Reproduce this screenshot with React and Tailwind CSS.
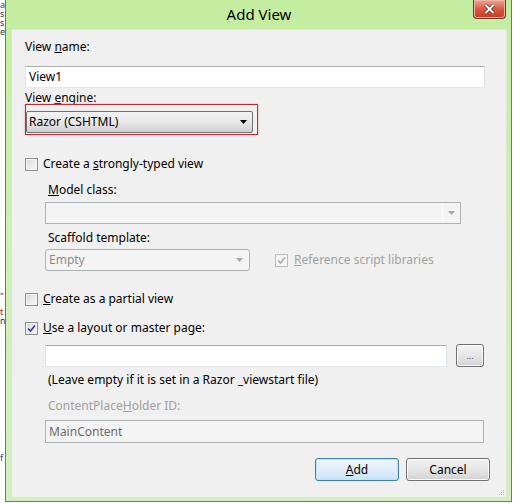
import React from "react";

// Win7-style checkbox
const Check = ({ checked = false, disabled = false }) => (
  <span
    className={
      disabled
        ? "flex h-[13px] w-[13px] shrink-0 items-center justify-center border border-[#bcbcbc] bg-[#f6f6f6]"
        : "flex h-[13px] w-[13px] shrink-0 items-center justify-center border border-[#8e8f8f] bg-gradient-to-br from-[#d9d9d9] to-[#fafafa] shadow-[inset_0_0_0_1px_#f4f4f4]"
    }
  >
    {checked && (
      <svg width="9" height="9" viewBox="0 0 9 9">
        <path
          d="M1 4.5 L3.5 7 L8 1.5"
          fill="none"
          stroke={disabled ? "#a8a8a8" : "#2b3f9a"}
          strokeWidth="1.6"
        />
      </svg>
    )}
  </span>
);

const Arrow = ({ color = "#000" }) => (
  <svg width="7" height="4" viewBox="0 0 7 4">
    <path d="M0 0 H7 L3.5 4 Z" fill={color} />
  </svg>
);

const Button = ({ children, primary = false, className = "" }) => (
  <button
    className={
      primary
        ? `flex h-[23px] items-center justify-center rounded-[3px] border border-[#3c7fb1] bg-gradient-to-b from-[#eef6fc] via-[#e0eef8] to-[#c9e2f2] shadow-[inset_0_0_0_1px_#bfe3f8] ${className}`
        : `flex h-[23px] items-center justify-center rounded-[3px] border border-[#707070] bg-gradient-to-b from-[#f2f2f2] via-[#e6e6e6] to-[#d2d2d2] shadow-[inset_0_0_0_1px_#fcfcfc] ${className}`
    }
  >
    {children}
  </button>
);

export default function App() {
  return (
    <div className="flex h-[503px] w-[515px] overflow-hidden bg-white font-['Noto_Sans',sans-serif] text-[12px] leading-[16px] text-black">
      {/* page behind the dialog */}
      <div className="flex w-[5px] shrink-0 flex-col items-start overflow-hidden text-[9px] leading-[9px]">
        <span className="text-[#1a3fa0]">a</span>
        <span className="text-[#333]">s</span>
        <span className="text-[#333]">s</span>
        <span className="text-[#333]">e</span>
        <span className="mt-[256px] text-[#333]">"</span>
        <span className="mt-[6px] text-[#b01010]">t</span>
        <span className="text-[#333]">n</span>
        <span className="mt-[128px] text-[#1a3fa0]">f</span>
      </div>

      {/* dialog frame */}
      <div className="relative flex h-[502px] w-[507px] shrink-0 flex-col border border-t-0 border-[#6c7c64] bg-gradient-to-b from-[#c4eda0] via-[#d0efb6] to-[#d6efc2] pl-[6px] pr-[5px] pb-[4px]">
        {/* title bar */}
        <div className="flex h-[30px] shrink-0 items-center justify-center pb-[2px] text-[15px] text-black">
          Add View
        </div>
        <div className="absolute right-[5px] top-0 flex h-[19px] w-[33px] items-center justify-center rounded-b-[4px] border border-t-0 border-[#7b2e22] bg-gradient-to-b from-[#e9a597] via-[#d75a45] to-[#c13a24] shadow-[inset_0_0_0_1px_#f0b4a8]">
          <svg width="11" height="10" viewBox="0 0 11 10">
            <path d="M1.5 1 L9.5 9 M9.5 1 L1.5 9" stroke="#5a1f18" strokeWidth="3.4" />
            <path d="M1.5 1 L9.5 9 M9.5 1 L1.5 9" stroke="#fff" strokeWidth="2" />
          </svg>
        </div>

        {/* client area */}
        <div className="relative flex h-[467px] flex-col bg-[#f0f0f0] pl-[13px] pt-[9px] shadow-[0_0_0_1px_#dbe8cf]">
          <div>
            View <span className="underline">n</span>ame:
          </div>
          <div className="mt-[11px] flex h-[22px] w-[460px] items-center border border-[#abadb3] border-b-[#e3e9ef] border-l-[#e2e3ea] border-r-[#dbdfe6] bg-white pl-[3px]">
            View1
          </div>
          <div className="mt-[2px]">
            View <span className="underline">e</span>ngine:
          </div>
          <div className="relative ml-[1px] mt-[5px] w-[227px]">
            <div className="flex h-[22px] items-center justify-between rounded-[2px] border border-[#707070] bg-gradient-to-b from-[#f2f2f2] via-[#e8e8e8] to-[#d0d0d0] pl-[2px] pr-[5px]">
              <span>Razor (CSHTML)</span>
              <Arrow />
            </div>
            <div className="pointer-events-none absolute -left-[1px] -right-[5px] -top-[7px] -bottom-[2px] border border-[#c52a34] shadow-[0_0_2px_#f2a0a0]" />
          </div>

          <div className="mt-[23px] flex h-[16px] items-center gap-[5px]">
            <Check />
            <span>
              Create a <span className="underline">s</span>trongly-typed view
            </span>
          </div>
          <div className="ml-[23px] mt-[10px]">
            <span className="underline">M</span>odel class:
          </div>
          <div className="ml-[20px] mt-[4px] flex h-[22px] w-[416px] items-stretch border border-[#adb2b5] bg-[#f4f4f4]">
            <div className="flex-1" />
            <div className="flex w-[18px] items-center justify-center border-l border-[#fafafa]">
              <Arrow color="#a6a6a6" />
            </div>
          </div>
          <div className="ml-[23px] mt-[6px]">
            Scaf<span className="underline">f</span>old template:
          </div>
          <div className="ml-[20px] mt-[3px] flex items-center">
            <div className="flex h-[22px] w-[205px] items-center justify-between rounded-[3px] border border-[#adb2b5] bg-[#f4f4f4] pl-[3px] pr-[6px] text-[#8d8d8d]">
              <span>Empty</span>
              <Arrow color="#a6a6a6" />
            </div>
            <div className="ml-[25px] flex items-center gap-[6px] text-[#a0a0a0]">
              <Check checked disabled />
              <span>
                <span className="underline">R</span>eference script libraries
              </span>
            </div>
          </div>

          <div className="mt-[20px] flex h-[16px] items-center gap-[5px]">
            <Check />
            <span>
              <span className="underline">C</span>reate as a partial view
            </span>
          </div>
          <div className="mt-[13px] flex h-[16px] items-center gap-[5px]">
            <Check checked />
            <span>
              <span className="underline">U</span>se a layout or master page:
            </span>
          </div>
          <div className="ml-[20px] mt-[8px] flex items-center gap-[9px]">
            <div className="h-[22px] w-[402px] border border-[#abadb3] border-b-[#e3e9ef] border-l-[#e2e3ea] border-r-[#dbdfe6] bg-white" />
            <Button className="w-[28px] text-[9px] leading-[10px] text-[#555]">...</Button>
          </div>
          <div className="ml-[23px] mt-[5px]">
            (Leave empty if it is set in a Razor _viewstart file)
          </div>
          <div className="ml-[23px] mt-[10px] text-[#a0a0a0]">
            ContentPlace<span className="underline">H</span>older ID:
          </div>
          <div className="ml-[20px] mt-[6px] flex h-[23px] w-[439px] items-center border border-[#adb2b5] bg-[#f4f4f4] pl-[3px] text-[#6d6d6d]">
            MainContent
          </div>

          <div className="mr-[16px] mt-[15px] flex justify-end gap-[7px]">
            <Button primary className="w-[84px]">
              <span className="underline">A</span>dd
            </Button>
            <Button className="w-[84px]">Cancel</Button>
          </div>

          {/* size grip */}
          <div className="absolute bottom-[2px] right-[2px] grid grid-cols-3 gap-[1px]">
            <span className="h-[1px] w-[1px]" />
            <span className="h-[1px] w-[1px]" />
            <span className="h-[1px] w-[1px] bg-[#b8b8b8]" />
            <span className="h-[1px] w-[1px]" />
            <span className="h-[1px] w-[1px] bg-[#b8b8b8]" />
            <span className="h-[1px] w-[1px] bg-[#b8b8b8]" />
            <span className="h-[1px] w-[1px] bg-[#b8b8b8]" />
            <span className="h-[1px] w-[1px] bg-[#b8b8b8]" />
            <span className="h-[1px] w-[1px] bg-[#b8b8b8]" />
          </div>
        </div>
      </div>
    </div>
  );
}
